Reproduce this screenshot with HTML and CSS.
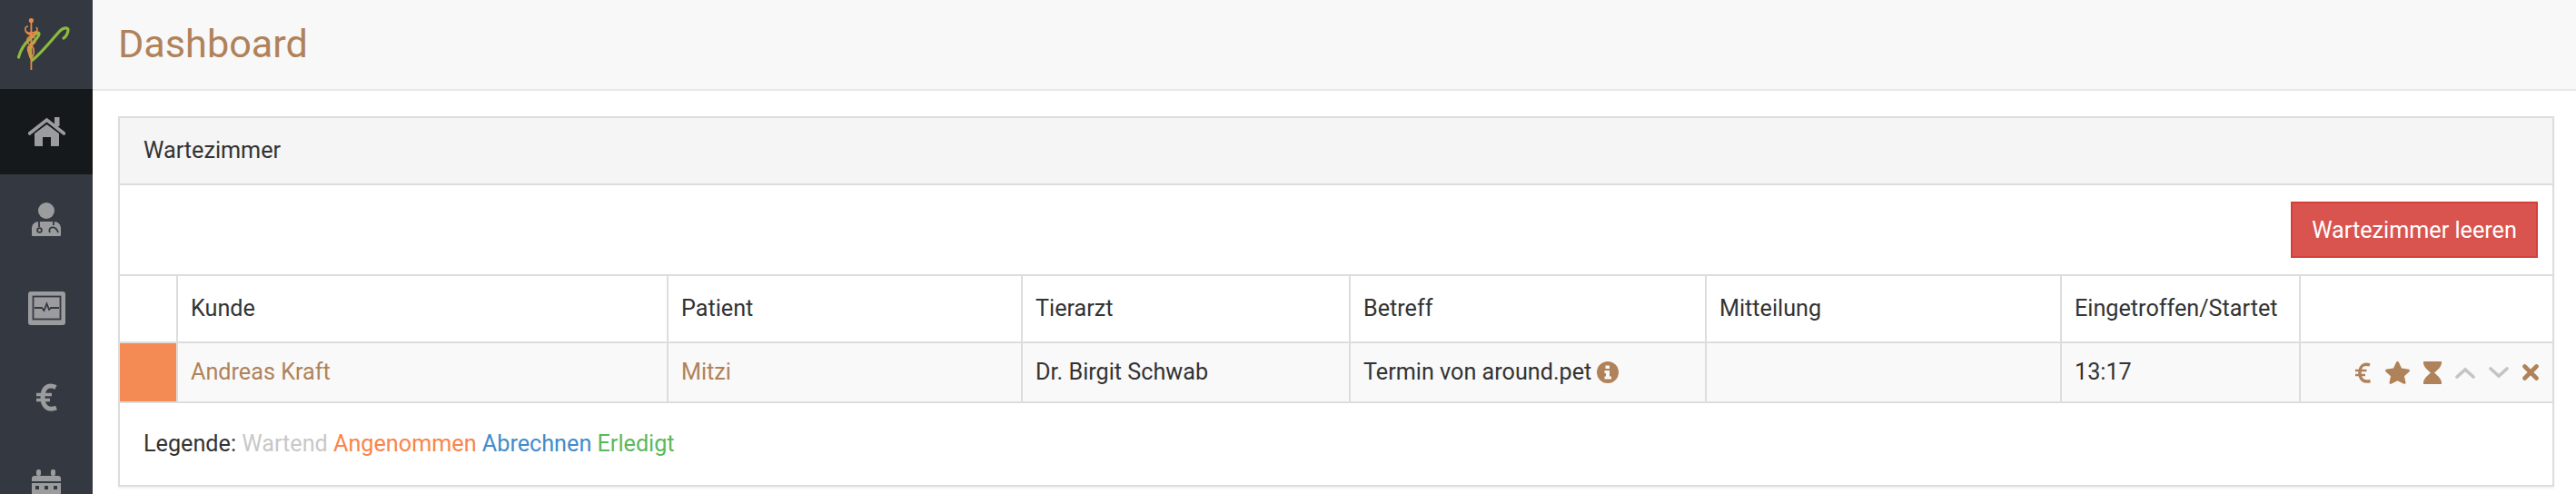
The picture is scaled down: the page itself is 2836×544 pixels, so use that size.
FILE: index.html
```html
<!DOCTYPE html>
<html lang="de">
<head>
  <meta charset="UTF-8">
  <title>Dashboard</title>
  <link rel="stylesheet" href="styles.css">
</head>
<body>

  <div class="layout">
    <nav class="sidebar">
      <div class="logo">
        <svg width="102" height="98" viewBox="0 0 102 98">
          <path class="logo-green" d="M20.5 63 C23 54 28 47 33 43 C37 39 42 34 43 37 C44 40 36 46 33 52"/>
          <path class="logo-green" d="M33 52 C32 58 33 63 36 66 C46 58 56 45 66 34 C70 30 75 30 75 33 C75 37 72 41 70 42"/>
          <path class="logo-rod" d="M34.4 24 V77"/>
          <circle class="logo-ball" cx="34.4" cy="22.6" r="2.6"/>
          <path class="logo-snake" d="M31 29 C26 29 27 36 33 38 C38 40 43 34 40 30 M29 35 C31 37 37 37 41 34"/>
          <circle class="logo-snake" cx="34.4" cy="44.5" r="4.6"/>
          <path class="logo-snake" d="M32 50 C29 54 31 60 36 62 C38 58 37 53 35 50"/>
        </svg>
      </div>

      <a class="nav-item nav-home active">
        <svg width="41" height="33" viewBox="0 0 41 33">
          <path class="nav-fill" d="M7 18 L20.5 8 L34 18 V31 a1 1 0 0 1 -1 1 H25 V22 H16 V32 H8 a1 1 0 0 1 -1 -1 Z"/>
          <path class="nav-line" d="M1.5 18 L20.5 3 L39.5 18"/>
          <rect class="nav-fill" x="29" y="0" width="5.5" height="10"/>
        </svg>
      </a>
      <a class="nav-item">
        <svg width="32" height="37" viewBox="0 0 32 37">
          <circle class="nav-fill" cx="16" cy="9" r="9"/>
          <path class="nav-fill" d="M0 36 V29 C0 24 3 21 8 21 H24 C29 21 32 24 32 29 V36 a1 1 0 0 1 -1 1 H1 a1 1 0 0 1 -1 -1 Z"/>
          <path class="nav-cut" d="M8 21 V27 M24 21 V25 M20 33 C17 27 26 24 29 33"/>
          <circle class="nav-cut" cx="8.5" cy="30.5" r="2.4"/>
        </svg>
      </a>
      <a class="nav-item">
        <svg width="41" height="37" viewBox="0 0 41 37">
          <rect class="nav-fill" x="0" y="0" width="41" height="37" rx="3"/>
          <rect class="nav-cut" x="5.5" y="5.5" width="30" height="25"/>
          <path class="nav-cut" d="M7 18 H15 L17.5 21 L20.5 13.5 L23 20 L25 18 H34"/>
        </svg>
      </a>
      <a class="nav-item">
        <svg width="23" height="31" viewBox="0 0 23 31">
          <path class="nav-euro" d="M21.5 4.5 C13 0.5 7 5 7 15.5 C7 26 13 30.5 22 27"/>
          <path class="nav-euro-bar" d="M0 12.5 H17 M0 18.5 H15"/>
        </svg>
      </a>
      <a class="nav-item">
        <svg width="32" height="37" viewBox="0 0 32 37">
          <rect class="nav-fill" x="5" y="0" width="5" height="7" rx="2"/>
          <rect class="nav-fill" x="21" y="0" width="5" height="7" rx="2"/>
          <path class="nav-fill" d="M0 10 a3 3 0 0 1 3 -3 H29 a3 3 0 0 1 3 3 V13 H0 Z"/>
          <path class="nav-fill" d="M0 15 H32 V34 a3 3 0 0 1 -3 3 H3 a3 3 0 0 1 -3 -3 Z"/>
          <rect class="nav-hole" x="4" y="18" width="4" height="4"/>
          <rect class="nav-hole" x="14" y="18" width="4" height="4"/>
          <rect class="nav-hole" x="24" y="18" width="4" height="4"/>
        </svg>
      </a>
    </nav>

    <div class="main">
      <header class="page-header">
        <h1 class="page-title">Dashboard</h1>
      </header>

      <div class="content">
        <section class="panel">
          <div class="panel-heading">Wartezimmer</div>
          <div class="panel-toolbar">
            <button class="btn-danger">Wartezimmer leeren</button>
          </div>

          <table class="table">
            <colgroup>
              <col class="col-status"><col class="col-kunde"><col class="col-patient"><col class="col-arzt">
              <col class="col-betreff"><col class="col-mitteilung"><col class="col-zeit"><col class="col-actions">
            </colgroup>
            <thead>
              <tr>
                <th></th>
                <th>Kunde</th>
                <th>Patient</th>
                <th>Tierarzt</th>
                <th>Betreff</th>
                <th>Mitteilung</th>
                <th>Eingetroffen/Startet</th>
                <th></th>
              </tr>
            </thead>
            <tbody>
              <tr>
                <td class="status-accepted"></td>
                <td><a class="link">Andreas Kraft</a></td>
                <td><a class="link">Mitzi</a></td>
                <td>Dr. Birgit Schwab</td>
                <td>
                  <div class="subject">
                    Termin von around.pet
                    <svg class="info-icon" width="24" height="24" viewBox="0 0 24 24">
                      <circle class="icon-brown" cx="12" cy="12" r="12"/>
                      <path class="icon-white" d="M9.5 4.5 H14 V8 H9.5 Z M8.5 10 H14 V16.5 H16 V19.5 H8.5 V16.5 H10 V13 H8.5 Z"/>
                    </svg>
                  </div>
                </td>
                <td></td>
                <td>13:17</td>
                <td>
                  <div class="actions">
                    <svg class="act-euro" width="17" height="23" viewBox="0 0 17 23">
                      <path class="euro-arc" d="M16 3 C9.5 0.5 5 4 5 11.5 C5 19 9.5 22.5 16.5 20.5"/>
                      <path class="euro-bar" d="M0 9 H12.5 M0 14 H11"/>
                    </svg>
                    <svg class="act-star" width="27" height="25" viewBox="0 0 27 25">
                      <path class="icon-brown" d="M13.5 0 C14.3 0 14.8 .6 15.2 1.4 L18 7.6 L25 8.6 C27 8.9 27.5 10.4 26.2 11.6 L21 16.2 L22.4 23 C22.8 24.8 21.4 25.4 20 24.6 L13.5 21.2 L7 24.6 C5.6 25.4 4.2 24.8 4.6 23 L6 16.2 L.8 11.6 C-.5 10.4 0 8.9 2 8.6 L9 7.6 L11.8 1.4 C12.2 .6 12.7 0 13.5 0 Z"/>
                    </svg>
                    <svg class="act-glass" width="20" height="25" viewBox="0 0 20 25">
                      <path class="icon-brown" d="M0 0 H20 V1.5 C20 6 15 10 12 12.5 C15 15 20 19 20 23.5 V25 H0 V23.5 C0 19 5 15 8 12.5 C5 10 0 6 0 1.5 Z"/>
                    </svg>
                    <svg class="act-up" width="22" height="13" viewBox="0 0 22 13">
                      <path class="chevron" d="M2 11 L11 3 L20 11"/>
                    </svg>
                    <svg class="act-down" width="22" height="13" viewBox="0 0 22 13">
                      <path class="chevron" d="M2 2 L11 10 L20 2"/>
                    </svg>
                    <svg class="act-close" width="18" height="18" viewBox="0 0 18 18">
                      <path class="cross" d="M2.5 2.5 L15.5 15.5 M15.5 2.5 L2.5 15.5"/>
                    </svg>
                  </div>
                </td>
              </tr>
            </tbody>
          </table>

          <div class="panel-legend">
            Legende:
            <span class="legend-waiting">Wartend</span>
            <span class="legend-accepted">Angenommen</span>
            <span class="legend-billing">Abrechnen</span>
            <span class="legend-done">Erledigt</span>
          </div>
        </section>
      </div>
    </div>
  </div>

</body>
</html>
```

FILE: styles.css
```css
html, body { margin: 0; height: 100%; overflow: hidden; }
body { font-family: Roboto, "Liberation Sans", sans-serif; font-size: 25.2px; line-height: 34px; color: #333; background-color: #fff; }

.layout { display: flex; height: 544px; overflow: hidden; }

/* Sidebar */
.sidebar { width: 102px; flex: none; background-color: #343941; overflow: hidden; }
.logo { height: 98px; }
.logo svg { display: block; }
.logo-green { fill: none; stroke: #8cbb3c; stroke-width: 3.2; stroke-linecap: round; }
.logo-rod { fill: none; stroke: #e98a4a; stroke-width: 1.8; }
.logo-ball { fill: #e98a4a; }
.logo-snake { fill: none; stroke: #e98a4a; stroke-width: 1.6; }
.nav-item { display: flex; align-items: center; justify-content: center; height: 98px; }
.nav-home { height: 94px; }
.nav-item.active { background-color: #16191c; }
.nav-fill { fill: #9b9c9e; }
.nav-line { fill: none; stroke: #9b9c9e; stroke-width: 3.6; stroke-linecap: round; }
.nav-cut { fill: none; stroke: #343941; stroke-width: 1.8; }
.nav-hole { fill: #343941; }
.nav-euro { fill: none; stroke: #9b9c9e; stroke-width: 5; }
.nav-euro-bar { fill: none; stroke: #9b9c9e; stroke-width: 3.4; }

/* Main */
.main { flex: 1; min-width: 0; }
.page-header { height: 98px; background-color: #f8f8f8; border-bottom: 2px solid #e7e7e7; display: flex; align-items: center; padding-left: 28px; }
.page-title { margin: 0; font-size: 43.2px; font-weight: 400; line-height: 50px; color: #b08259; }
.content { padding: 28px 24px 0 28px; }

.panel { border: 2px solid #ddd; box-shadow: 0 2px 2px rgba(0,0,0,0.05); }
.panel-heading { height: 72px; padding: 0 26px; display: flex; align-items: center; background-color: #f5f5f5; border-bottom: 2px solid #ddd; }
.panel-toolbar { display: flex; justify-content: flex-end; padding: 18px 16px; }
.btn-danger { height: 62px; width: 272px; padding: 0; font-family: inherit; font-size: 25.2px; color: #fff; background-color: #d9534f; border: 2px solid #d43f3a; }

.table { width: 100%; table-layout: fixed; border-collapse: separate; border-spacing: 0; }
.col-status { width: 62px; }
.col-kunde { width: 540px; }
.col-patient { width: 390px; }
.col-arzt { width: 361px; }
.col-betreff { width: 392px; }
.col-mitteilung { width: 391px; }
.col-zeit { width: 263px; }
.col-actions { width: 279px; }
.table th, .table td { box-sizing: border-box; padding: 0 14px; text-align: left; font-weight: 400; border-top: 2px solid #ddd; border-left: 2px solid #ddd; white-space: nowrap; }
.table th { height: 74px; }
.table td { height: 68px; background-color: #f9f9f9; border-bottom: 2px solid #ddd; }
.table th:first-child, .table td:first-child { border-left: none; }
.table .status-accepted { background-color: #f58b54; }
.link { color: #b08259; }

.subject { display: flex; align-items: center; gap: 6px; }
.icon-brown { fill: #b08259; }
.icon-white { fill: #f9f9f9; }

.actions { display: flex; align-items: center; justify-content: flex-end; margin-right: 1px; }
.act-star { margin-left: 16px; }
.act-glass { margin-left: 15px; }
.act-up { margin-left: 15px; }
.act-down { margin-left: 15px; }
.act-close { margin-left: 15px; }
.euro-arc { fill: none; stroke: #b08259; stroke-width: 3.4; }
.euro-bar { fill: none; stroke: #b08259; stroke-width: 2.4; }
.chevron { fill: none; stroke: #c4c4c4; stroke-width: 3.6; stroke-linecap: round; }
.cross { fill: none; stroke: #b08259; stroke-width: 4.6; stroke-linecap: round; }

.panel-legend { padding: 28px 26px; }
.legend-waiting { color: #c8c8c8; }
.legend-accepted { color: #f9854a; }
.legend-billing { color: #428bca; }
.legend-done { color: #5cb85c; }
```
